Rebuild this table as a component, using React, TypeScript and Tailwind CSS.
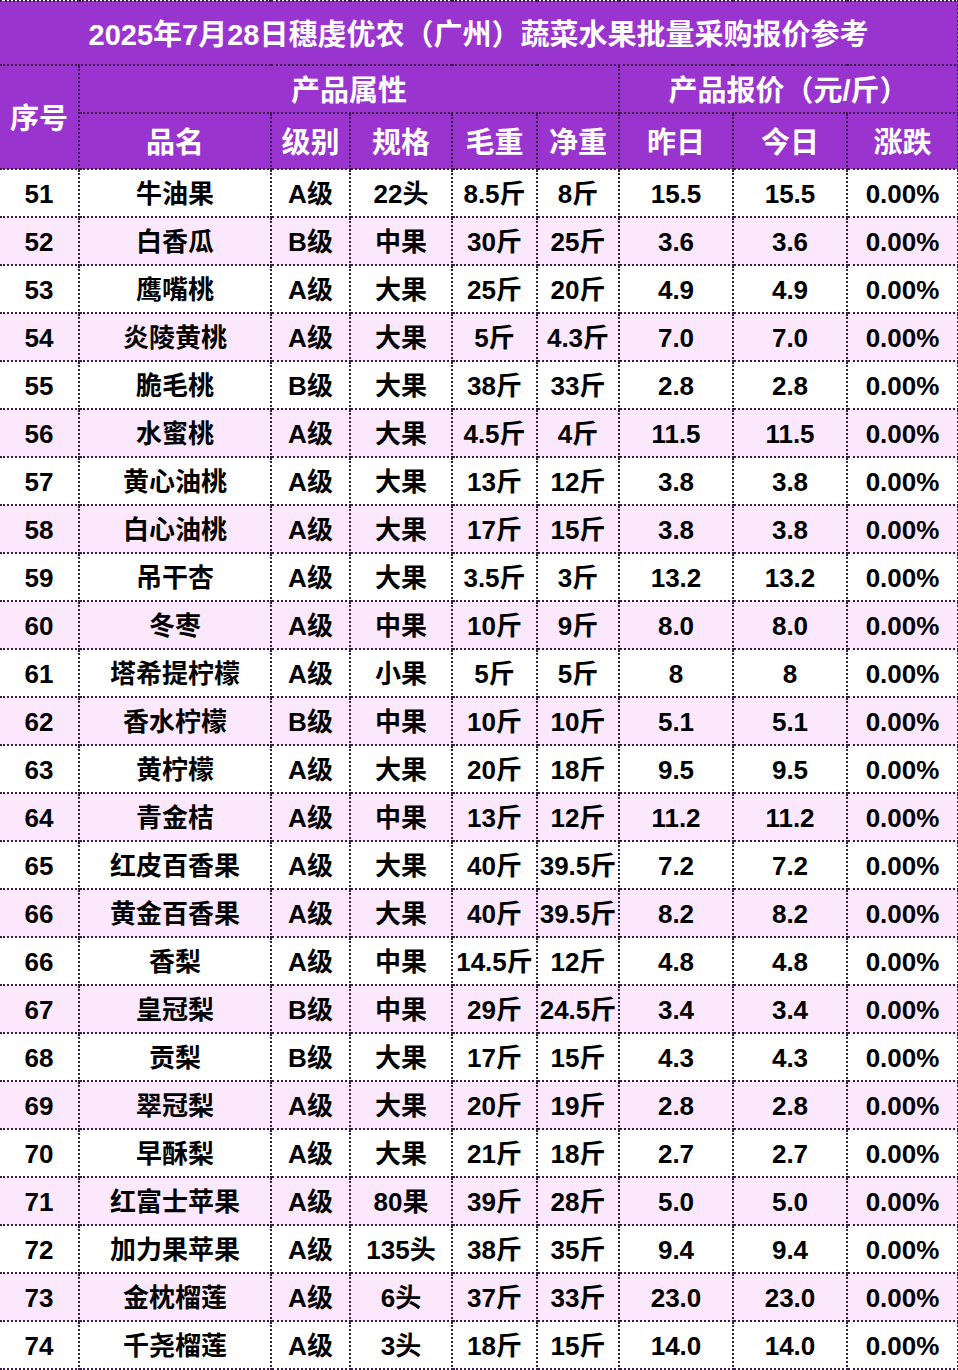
import React from 'react';

type Row = [string, string, string, string, string, string, string, string, string];

const rows: Row[] = [
  ['51', '牛油果', 'A级', '22头', '8.5斤', '8斤', '15.5', '15.5', '0.00%'],
  ['52', '白香瓜', 'B级', '中果', '30斤', '25斤', '3.6', '3.6', '0.00%'],
  ['53', '鹰嘴桃', 'A级', '大果', '25斤', '20斤', '4.9', '4.9', '0.00%'],
  ['54', '炎陵黄桃', 'A级', '大果', '5斤', '4.3斤', '7.0', '7.0', '0.00%'],
  ['55', '脆毛桃', 'B级', '大果', '38斤', '33斤', '2.8', '2.8', '0.00%'],
  ['56', '水蜜桃', 'A级', '大果', '4.5斤', '4斤', '11.5', '11.5', '0.00%'],
  ['57', '黄心油桃', 'A级', '大果', '13斤', '12斤', '3.8', '3.8', '0.00%'],
  ['58', '白心油桃', 'A级', '大果', '17斤', '15斤', '3.8', '3.8', '0.00%'],
  ['59', '吊干杏', 'A级', '大果', '3.5斤', '3斤', '13.2', '13.2', '0.00%'],
  ['60', '冬枣', 'A级', '中果', '10斤', '9斤', '8.0', '8.0', '0.00%'],
  ['61', '塔希提柠檬', 'A级', '小果', '5斤', '5斤', '8', '8', '0.00%'],
  ['62', '香水柠檬', 'B级', '中果', '10斤', '10斤', '5.1', '5.1', '0.00%'],
  ['63', '黄柠檬', 'A级', '大果', '20斤', '18斤', '9.5', '9.5', '0.00%'],
  ['64', '青金桔', 'A级', '中果', '13斤', '12斤', '11.2', '11.2', '0.00%'],
  ['65', '红皮百香果', 'A级', '大果', '40斤', '39.5斤', '7.2', '7.2', '0.00%'],
  ['66', '黄金百香果', 'A级', '大果', '40斤', '39.5斤', '8.2', '8.2', '0.00%'],
  ['66', '香梨', 'A级', '中果', '14.5斤', '12斤', '4.8', '4.8', '0.00%'],
  ['67', '皇冠梨', 'B级', '中果', '29斤', '24.5斤', '3.4', '3.4', '0.00%'],
  ['68', '贡梨', 'B级', '大果', '17斤', '15斤', '4.3', '4.3', '0.00%'],
  ['69', '翠冠梨', 'A级', '大果', '20斤', '19斤', '2.8', '2.8', '0.00%'],
  ['70', '早酥梨', 'A级', '大果', '21斤', '18斤', '2.7', '2.7', '0.00%'],
  ['71', '红富士苹果', 'A级', '80果', '39斤', '28斤', '5.0', '5.0', '0.00%'],
  ['72', '加力果苹果', 'A级', '135头', '38斤', '35斤', '9.4', '9.4', '0.00%'],
  ['73', '金枕榴莲', 'A级', '6头', '37斤', '33斤', '23.0', '23.0', '0.00%'],
  ['74', '千尧榴莲', 'A级', '3头', '18斤', '15斤', '14.0', '14.0', '0.00%'],
];

const cell = 'border-2 border-dotted border-[#3b1a4c] p-0 text-center whitespace-nowrap leading-tight';
const head = `${cell} text-white text-[29px] font-bold pt-[4px]`;

const App = () => {
  return (
    <div
      className="w-[958px] bg-white"
      style={{ fontFamily: '"Liberation Sans", "Noto Sans CJK SC", sans-serif' }}
    >
      <table className="w-[958px] table-fixed border-collapse">
        <colgroup>
          <col className="w-[79px]" />
          <col className="w-[192px]" />
          <col className="w-[79px]" />
          <col className="w-[102px]" />
          <col className="w-[85px]" />
          <col className="w-[82px]" />
          <col className="w-[114px]" />
          <col className="w-[114px]" />
          <col className="w-[111px]" />
        </colgroup>
        <thead className="bg-[#9a34cf]">
          <tr className="h-[64px]">
            <th colSpan={9} className={`${cell} border-l-0 pt-[4px] text-white text-[29px] font-bold`}>
              2025年7月28日穗虔优农（广州）蔬菜水果批量采购报价参考
            </th>
          </tr>
          <tr className="h-[48px]">
            <th rowSpan={2} className={`${head} border-l-0`}>序号</th>
            <th colSpan={5} className={head}>产品属性</th>
            <th colSpan={3} className={head}>产品报价（元/斤）</th>
          </tr>
          <tr className="h-[56px]">
            <th className={head}>品名</th>
            <th className={head}>级别</th>
            <th className={head}>规格</th>
            <th className={head}>毛重</th>
            <th className={head}>净重</th>
            <th className={head}>昨日</th>
            <th className={head}>今日</th>
            <th className={head}>涨跌</th>
          </tr>
        </thead>
        <tbody>
          {rows.map((r, i) => (
            <tr key={i} className={`h-[48px] ${i % 2 === 1 ? 'bg-[#fce8fc]' : 'bg-white'}`}>
              {r.map((v, j) => (
                <td
                  key={j}
                  className={`${cell} ${j === 0 ? 'border-l-0' : ''} pt-[2px] text-[26px] font-bold text-black`}
                >
                  {v}
                </td>
              ))}
            </tr>
          ))}
        </tbody>
      </table>
    </div>
  );
};

export default App;
